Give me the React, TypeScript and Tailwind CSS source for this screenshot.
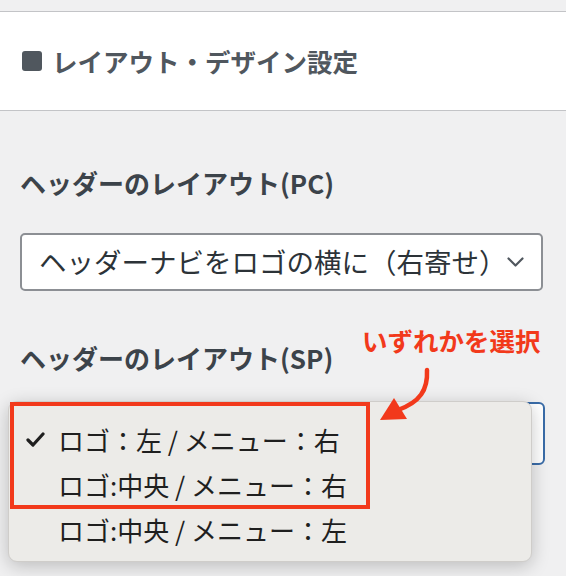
import React from 'react';

const jp = "font-['Noto_Sans_CJK_JP','Noto_Sans',sans-serif]";

const options = [
  { label: 'ロゴ：左 / メニュー：右', checked: true },
  { label: 'ロゴ:中央 / メニュー：右', checked: false },
  { label: 'ロゴ:中央 / メニュー：左', checked: false },
];

const Chevron = () => (
  <svg width="17" height="10" viewBox="0 0 17 10" className="shrink-0">
    <path d="M1.5 1.5 L8.5 8.5 L15.5 1.5" fill="none" stroke="#50575e" strokeWidth="2.2" strokeLinecap="round" strokeLinejoin="round" />
  </svg>
);

const Check = () => (
  <svg width="19" height="15" viewBox="0 0 19 15">
    <path d="M2 8 L7 13 L17 2" fill="none" stroke="#1f1f1f" strokeWidth="3.2" strokeLinecap="round" strokeLinejoin="round" />
  </svg>
);

export default function App() {
  return (
    <div className={`relative w-[566px] h-[576px] overflow-hidden bg-[#f0f0f1] pt-[11px] ${jp}`}>
      {/* section header */}
      <div className="h-[100px] bg-white border-y border-[#c3c4c7] flex items-center px-[22px] gap-[10px]">
        <span className="w-[20px] h-[20px] rounded-[3px] bg-[#50575e]" />
        <h2 className="text-[25.5px] font-bold text-[#50575e] leading-none">レイアウト・デザイン設定</h2>
      </div>

      <div className="px-[20px]">
        <p className="mt-[54px] text-[26px] leading-[36px] font-bold text-[#3c434a]">ヘッダーのレイアウト(PC)</p>
        <div className="mt-[32px] w-[523px] h-[58px] bg-white border-2 border-[#8c8f94] rounded-[5px] flex items-center justify-between pl-[17px] pr-[18px]">
          <span className="text-[27.5px] text-[#2c3338] leading-none whitespace-nowrap">ヘッダーナビをロゴの横に（右寄せ）</span>
          <Chevron />
        </div>

        <p className="mt-[49px] text-[26px] leading-[36px] font-bold text-[#3c434a]">ヘッダーのレイアウト(SP)</p>

        <div className="relative mt-[26px]">
          <div className="w-[525px] h-[63px] bg-white border-2 border-[#3a6ca8] rounded-[6px]" />

          {/* open dropdown */}
          <div className="absolute left-[-12px] top-[-1px] w-[524px] bg-[#ecebe8] border border-[#cfcdca] rounded-[9px] shadow-[0_4px_18px_rgba(0,0,0,0.22)] pt-[15px] pb-[9px]">
            {options.map((o) => (
              <div key={o.label} className="h-[45px] flex items-center pl-[17px] gap-[13px]">
                <span className="w-[19px] flex justify-center">{o.checked && <Check />}</span>
                <span className="text-[26px] text-[#1f1f1f] leading-none whitespace-nowrap">{o.label}</span>
              </div>
            ))}
            {/* highlight box */}
            <div className="absolute left-[1px] top-0 w-[360px] h-[107px] border-[4px] border-[#f2391b]" />
          </div>
        </div>
      </div>

      {/* annotation */}
      <span className="absolute left-[362px] top-[322px] text-[25.5px] leading-[36px] font-bold text-[#f2391b]">いずれかを選択</span>
      <svg className="absolute left-0 top-0" width="566" height="576" viewBox="0 0 566 576">
        <path d="M427 370 C428 390 420 402 398 410" fill="none" stroke="#f2391b" strokeWidth="4.5" strokeLinecap="round" />
        <polygon points="380,420 394,398 407,419" fill="#f2391b" />
      </svg>
    </div>
  );
}
